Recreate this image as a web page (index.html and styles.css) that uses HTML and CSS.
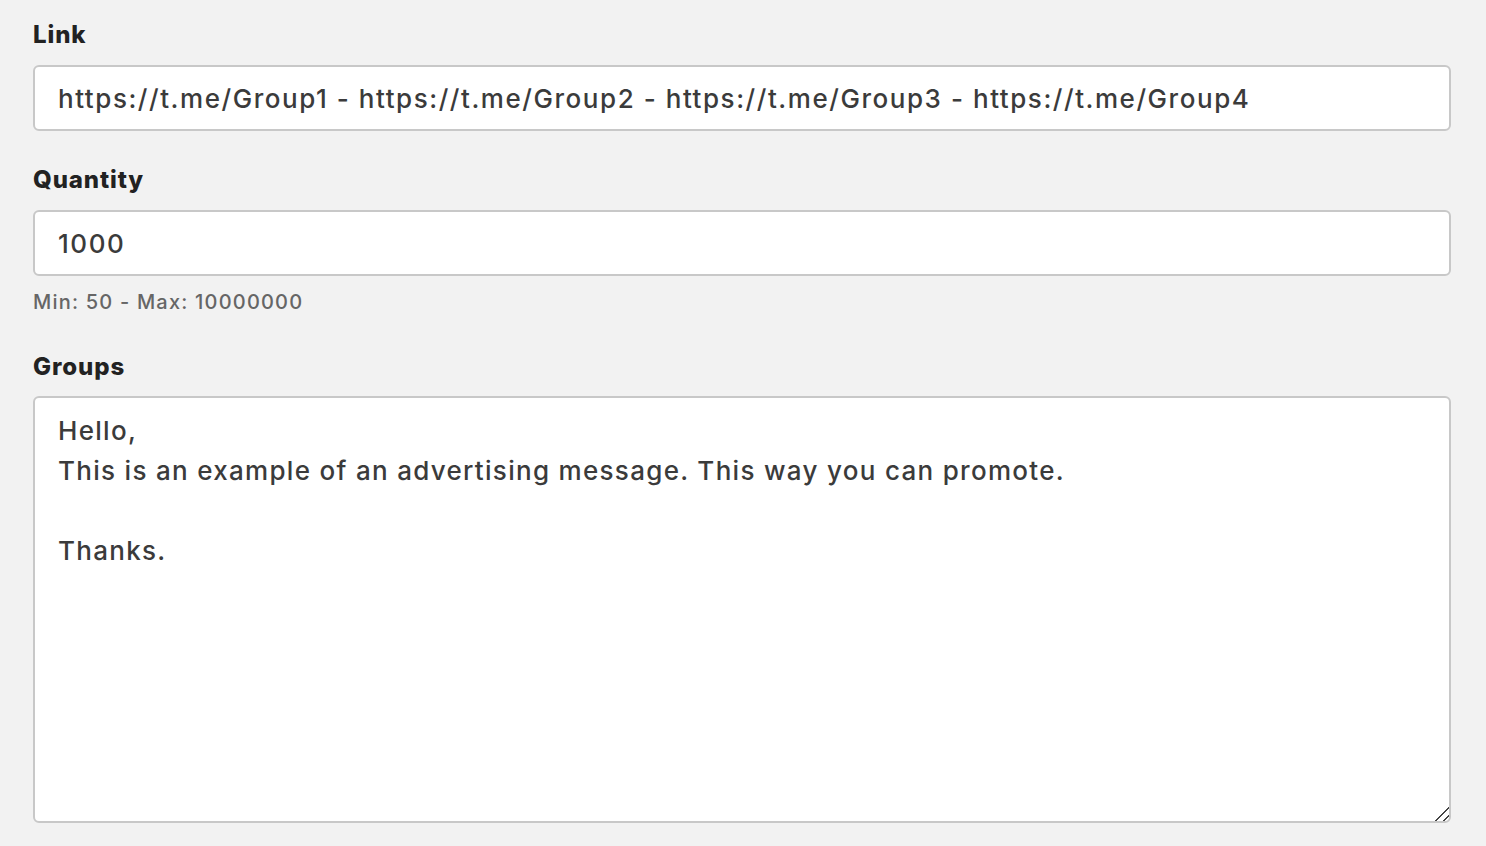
FILE: index.html
```html
<!DOCTYPE html>
<html lang="en">
<head>
    <meta charset="UTF-8">
    <meta name="viewport" content="width=device-width, initial-scale=1.0">
    <title>Order</title>
    <link rel="stylesheet" href="styles.css">
</head>
<body>
    <form class="order-form">
        <div class="field">
            <label for="link">Link</label>
            <input type="text" id="link" value="https://t.me/Group1 - https://t.me/Group2 - https://t.me/Group3 - https://t.me/Group4">
        </div>
        <div class="field">
            <label for="quantity">Quantity</label>
            <input type="text" id="quantity" value="1000">
            <small class="hint">Min: 50 - Max: 10000000</small>
        </div>
        <div class="field">
            <label for="groups">Groups</label>
            <textarea id="groups">Hello,
This is an example of an advertising message. This way you can promote.

Thanks.</textarea>
        </div>
    </form>
</body>
</html>
```

FILE: styles.css
```css
html, body {
    margin: 0;
    background-color: #f2f2f2;
}
body {
    font-family: Inter, "Open Sans", sans-serif;
    padding: 20px 35px 0 33px;
}
.order-form {
    display: flex;
    flex-direction: column;
    gap: 34px;
}
.field {
    display: flex;
    flex-direction: column;
}
.field label {
    font-size: 24px;
    line-height: 30px;
    font-weight: 800;
    letter-spacing: 0.9px;
    color: #222;
    margin-bottom: 15px;
}
.field input, .field textarea {
    font-family: inherit;
    font-size: 26px;
    font-weight: 500;
    letter-spacing: 1.3px;
    color: #3b3b3b;
    background-color: #fff;
    border: 2px solid #c8c8c8;
    border-radius: 6px;
    box-sizing: border-box;
    width: 100%;
    margin: 0;
    outline: none;
}
.field input {
    height: 66px;
    padding: 0 23px;
    letter-spacing: 1.55px;
}
.field textarea {
    height: 427px;
    padding: 13px 23px 11px;
    line-height: 40px;
    margin-top: -1px;
}
.field textarea::-webkit-scrollbar {
    width: 18px;
    height: 18px;
}
.field textarea::-webkit-resizer {
    background:
        linear-gradient(135deg, transparent 47%, #444 47%, #444 55%, transparent 55%) no-repeat 0 0 / 16px 16px,
        linear-gradient(135deg, transparent 47%, #444 47%, #444 57%, transparent 57%) no-repeat 8px 8px / 8px 8px;
}
.hint {
    font-size: 20px;
    line-height: 24px;
    font-weight: 500;
    letter-spacing: 1.2px;
    color: #666;
    margin-top: 14px;
    margin-bottom: 4px;
}
```
